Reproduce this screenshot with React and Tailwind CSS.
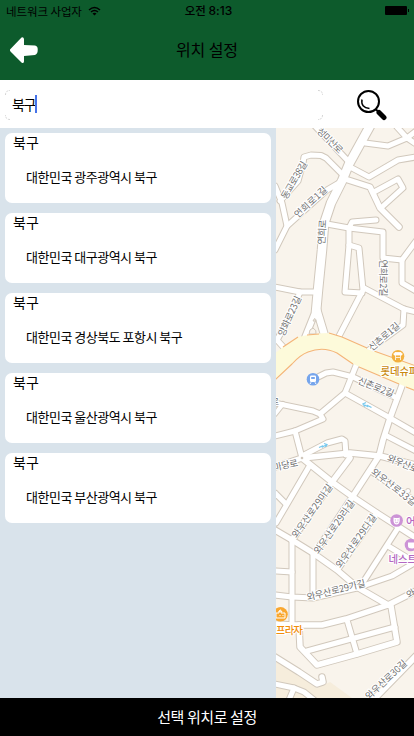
import React from "react";

const results = [
  "대한민국 광주광역시 북구",
  "대한민국 대구광역시 북구",
  "대한민국 경상북도 포항시 북구",
  "대한민국 울산광역시 북구",
  "대한민국 부산광역시 북구",
];

// Each street: [points, width of the white fill]
const streets = [
  ["313,124 349,162", 5],
  ["280,201 298,181 303,163 304,157 311,155 321,155.5 326,158 342,174", 5],
  ["275,186 282,203 287,226 275,250", 5],
  ["287,226 327,190 339,183", 5],
  ["365,143 388,146 407,138 416,144", 5],
  ["397,127 407,138 416,131", 5],
  ["350,167 369,177 398,160 416,157", 5],
  ["345,179 370,187 380,208 399,227", 5.5],
  ["374,192 398,179 403,188 382,207", 5],
  ["327,224 349,228 383,232 383,258 402,260 416,241", 5],
  ["376,220 352,222 349,228 349,245 345,292 362,293", 5],
  ["349,245 359,248 363,290 338,338", 5],
  ["402,260 402,283 416,291", 5],
  ["364,288 404,309 416,312", 5],
  ["404,309 403,325 369,350", 5],
  ["275,287 300,292 317,292", 5],
  ["300,292 290,316 277,340 286,350", 5],
  ["318,377 326,373 333,372 353,377 397,398", 5],
  ["357,363 345,393 320,414", 5],
  ["275,403 313,411 320,414 323,419 295,431 275,436", 5],
  ["275,414 283,404", 4],
  ["295,431 302,458", 5],
  ["345,393 390,418 416,433", 5],
  ["404,380 390,418 383,440 379,456 353,496 315,553", 5.5],
  ["385,435 416,451", 5],
  ["302,456 327,443 342,439 345,441 346,455", 5],
  ["302,458 350,453 380,456 416,465", 5.5],
  ["275,467 302,458 332,482 353,497 377,513 416,538", 5.5],
  ["350,458 332,482 292,540", 5.5],
  ["310,465 276,523", 5],
  ["275,493 285,503", 5],
  ["371,471 416,502", 5],
  ["275,530 292,540 313,553 337,570 357,587 388,605", 5.5],
  ["377,513 338,569", 5],
  ["398,528 362,584", 5],
  ["388,546 416,563", 5],
  ["292,540 292,624", 5],
  ["313,553 313,597", 5],
  ["275,571 292,572", 5],
  ["275,595 292,597 313,598 357,588 392,576 416,562", 5],
  ["276,624 292,625 322,625 346,619 388,605 416,591", 5.5],
  ["391,606 397,642 357,654 317,665 300,647 299,625", 5.5],
  ["347,620 357,654", 5],
  ["307,651 395,627", 5],
  ["275,657 299,672 317,684 323,682 322,677", 5.5],
  ["416,656 373,700", 6],
  ["275,684 294,688 289,700", 5],
  ["294,688 304,692 314,700", 5],
  ["370,126 349,164 342,181 331,203 324,224 322,250 318,290 316,312", 8.5],
  ["316,310 304,340", 6],
  ["317,310 326,340", 7],
];

// Rotated street names: [text, centre x, centre y, angle, length]
const labels = [
  ["성미산로", 330, 140.5, 45, 32],
  ["동교로38길", 294, 180, -60, 42],
  ["연희로1길", 310.5, 202, -43, 41],
  ["연희로", 322, 232, -87, 25],
  ["연희로2길", 383, 278, 90, 37],
  ["양화로23길", 289.5, 316, -66, 43],
  ["신촌로1길", 384, 336.5, -41, 38],
  ["신촌로2길", 376, 387, 22, 38],
  ["마당로", 285.5, 465, -12, 25],
  ["와우산로", 403, 463.5, 22, 33],
  ["와우산로33길", 394, 487, 38, 54],
  ["와우산로29마길", 312, 511, -55, 63],
  ["와우산로29라길", 334, 527, -55, 63],
  ["와우산로29다길", 356, 541, -55, 63],
  ["와우산로29가길", 336, 590, -14, 60],
  ["와우산로30길", 386, 679.5, -43, 53],
];

function Map() {
  return (
    <svg
      className="block h-full w-full"
      viewBox="276 128 138 570"
      fontFamily="'Noto Sans CJK KR', sans-serif"
    >
      <rect x="276" y="128" width="138" height="570" fill="#f9f4ec" />
      <path d="M276 655L317 688L330 682L352 698H276Z" fill="#f6eddc" />
      <g fill="none" stroke="#d1c8bc" strokeLinejoin="round" strokeLinecap="round">
        {streets.map(([p, w], i) => (
          <polyline key={i} points={p} strokeWidth={w + 2} />
        ))}
      </g>
      <g fill="none" stroke="#ffffff" strokeLinejoin="round" strokeLinecap="round">
        {streets.map(([p, w], i) => (
          <polyline key={i} points={p} strokeWidth={w} />
        ))}
      </g>
      <path
        d="M309 334Q309 329 313 328Q317 330 316 334Z M314.5 318.5L316 321H313Z"
        fill="#f9f4ec"
        stroke="#d1c8bc"
      />
      <path
        d="M274 354L283 347L298 337Q315 333 330 333L342 337L370 350L416 366V391L383 377L353 364L337 353Q323 346 308 352Q300 355 292 364L274 381Z"
        fill="#fdfada"
      />
      <g fill="none" stroke="#f4b477" strokeWidth="1.1">
        <path d="M283 347L298 337M307 335L319 334M329 333L342 337M342 337L367 348M374 351L416 366" />
        <path d="M274 381L292 364Q300 355 308 352Q323 346 337 353L353 364M359 367L399 384M406 387L416 391" />
      </g>
      <circle cx="302" cy="458" r="1.3" fill="#d1c8bc" />
      <circle cx="408" cy="491" r="2.5" fill="#fff" stroke="#d1c8bc" />

      <g fill="none" stroke="#79c9ee" strokeWidth="1.3">
        <path d="M371.500 407.500L367.500 405.500V406.500L363 404M366 402.500L363 404L365 406.500" />
        <path d="M319 447.500L322.500 446V447L327 444.500M324 443.500L327 444.500L325.500 447" />
      </g>

      <g
        fill="#717171"
        stroke="#fff"
        strokeWidth="2"
        paintOrder="stroke"
        fontSize="9.5"
        textAnchor="middle"
      >
        {labels.map(([t, x, y, a, len]) => (
          <text
            key={t}
            x={x}
            y={y + 3.5}
            textLength={len}
            transform={`rotate(${a} ${x} ${y})`}
          >
            {t}
          </text>
        ))}
        <text x="411" y="597" transform="rotate(-30 411 594)">와</text>
        <text x="275" y="405" fontSize="9">로</text>
      </g>

      {/* subway station */}
      <circle cx="313" cy="379.3" r="6.3" fill="#76a5ec" />
      <rect x="310" y="375.5" width="6" height="6.5" rx="1.3" fill="#fff" />
      <rect x="311.2" y="377" width="3.6" height="2" fill="#76a5ec" />
      <path d="M311 382.3L310 384M315 382.3L316 384" stroke="#fff" strokeWidth="1" />

      {/* supermarket */}
      <circle cx="398" cy="356.3" r="6.3" fill="#f3b13f" />
      <path
        d="M394 353.500L395 352.500H401L402 353.500V355H394ZM395.500 355V360M400.500 355V360M396 357.500H400"
        fill="#fff"
        stroke="#fff"
        strokeWidth=".8"
      />

      {/* theatre */}
      <circle cx="396.6" cy="520.5" r="6.3" fill="#cc93d6" />
      <path d="M393.5 517.5Q396.5 518.5 399.7 517.5V521Q399 524.5 396.6 524.5Q394 524.5 393.5 521Z" fill="#fff" />
      <path d="M394.8 520H396M397.4 520H398.6M395 522Q396.6 523.5 398.2 522" stroke="#cc93d6" strokeWidth=".8" fill="none" />

      {/* cafe */}
      <circle cx="411" cy="545" r="6.3" fill="#cc93d6" />
      <path d="M408 542.5H415V546Q415 548.5 411.5 548.5Q408 548.5 408 546Z" fill="#fff" />

      {/* plaza */}
      <circle cx="280.5" cy="614.3" r="7.3" fill="#f9a72f" />
      <path d="M276 613H279V611H281V613H285V618H276Z" fill="none" stroke="#fff" />
      <path d="M279 612Q280 608 282 612M280 615V616M283 615V616" fill="none" stroke="#fff" />

      <g stroke="#fff" strokeWidth="2" paintOrder="stroke" fontSize="10.5" fontWeight="500">
        <text x="380.5" y="374.5" fill="#c98a10" textLength="38">롯데슈퍼</text>
        <text x="406" y="524.5" fill="#b367c2">어</text>
        <text x="388.5" y="563" fill="#b367c2" textLength="38">네스트호</text>
        <text x="276" y="634" fill="#f18d0c" textLength="27">프라자</text>
      </g>
    </svg>
  );
}

export default function App() {
  return (
    <div className="flex h-[736px] w-[414px] flex-col overflow-hidden bg-white font-['Noto_Sans_CJK_KR',sans-serif] text-black">
      <header className="h-20 shrink-0 bg-[#0d5b2c]">
        <div className="grid h-5 grid-cols-3 items-center pl-[6px] pr-[5px] text-[11.5px] leading-5">
          <div className="flex items-center gap-[6px] whitespace-nowrap">
            <span className="tracking-[-0.1px]">네트워크 사업자</span>
            <svg className="h-[10px] w-[13px]" viewBox="0 0 13 10" fill="none" stroke="black">
              <path d="M1 4Q6.500-1 12 4M3 6Q6.500 3 10 6" strokeWidth="1.5" />
              <path d="M4.500 7.500Q6.500 6 8.500 7.500L6.500 9.500Z" fill="black" stroke="none" />
            </svg>
          </div>
          <span className="pl-[2px] text-center font-medium">
            오전 <span className="font-['Inter',sans-serif] text-[12px]">8:13</span>
          </span>
          <div className="flex items-center justify-end gap-px">
            <div className="h-[9px] w-[22px] rounded-[1px] bg-black" />
            <div className="h-[3px] w-px bg-black" />
          </div>
        </div>
        <div className="grid h-[60px] grid-cols-3 items-center px-[10px]">
          <svg className="h-[27px] w-[28px]" viewBox="0 0 28 27" fill="white">
            <path d="M0 12.500L11.500.500Q13.500-.500 14 2V8L25 8.500Q28 9 27.700 13Q27.800 17 25 18L14 19V24.500Q13.500 27 11.500 25.500L.500 14.500Q-.300 13.500 0 12.500Z" />
          </svg>
          <h1 className="whitespace-nowrap pb-[2px] text-center text-[16px] font-normal tracking-[-0.1px]">위치 설정</h1>
        </div>
      </header>

      <div className="flex h-12 shrink-0 items-center justify-between pl-[5px] pr-[27px] pt-[2px]">
        <div className="relative flex h-[30px] w-[318px] items-center pl-[7px]">
          <svg className="absolute inset-0 h-full w-full" viewBox="0 0 318 30" fill="none" stroke="#d4d4d4" strokeDasharray="2 1">
            <path d="M.5 5Q.5.500 5 .5M313 .5Q317.500.500 317.500 5M317.500 25Q317.500 29.500 313 29.500M5 29.500Q.5 29.500.5 25" />
          </svg>
          <span className="pb-[3px] text-[14px] leading-5 tracking-[-1.3px]">북구</span>
          <span className="mb-[2px] h-[18px] w-[2px] bg-[#4673e9]" />
        </div>
        <svg className="h-[31px] w-[31px]" viewBox="0 0 31 31" fill="none" stroke="black">
          <circle cx="12.500" cy="11.500" r="10.500" strokeWidth="2" />
          <path d="M6 9.500Q4.500 17.500 13.500 18.500" strokeWidth="1.500" />
          <path d="M19.500 19L22.500 22" strokeWidth="2" />
          <path d="M23 22.500L28 27.500" strokeWidth="5" strokeLinecap="round" />
        </svg>
      </div>

      <main className="flex h-[570px] shrink-0">
        <ul className="flex w-[276px] shrink-0 flex-col gap-[10px] bg-[#d9e3eb] p-[5px]">
          {results.map((address) => (
            <li key={address} className="h-[70px] w-[266px] rounded-[7px] bg-white">
              <p className="pl-2 text-[14px] leading-[18px]">북구</p>
              <p className="pl-[21px] pt-[16px] text-[13px] leading-5 tracking-[-0.5px]">{address}</p>
            </li>
          ))}
        </ul>
        <div className="w-[138px] shrink-0">
          <Map />
        </div>
      </main>

      <button className="h-[38px] w-full shrink-0 bg-black text-center text-[15px] font-normal tracking-[-0.4px] text-white">
        선택 위치로 설정
      </button>
    </div>
  );
}
